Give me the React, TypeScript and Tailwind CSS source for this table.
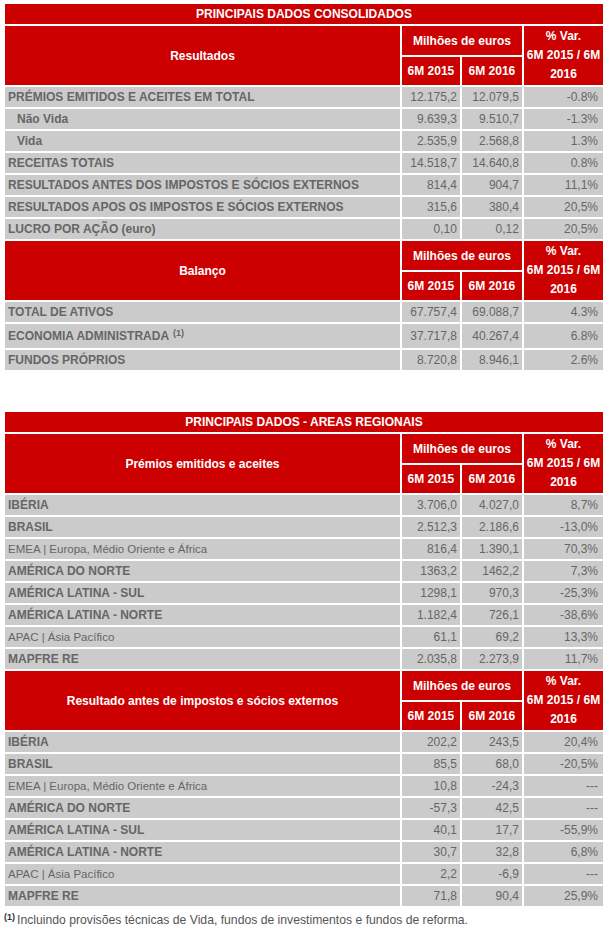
import React from "react";

type Row = {
    label: string;
    a: string;
    b: string;
    v: string;
    bold?: boolean;
    indent?: boolean;
    note?: boolean;
};

const resultados: Row[] = [
    { label: "PRÉMIOS EMITIDOS E ACEITES EM TOTAL", a: "12.175,2", b: "12.079,5", v: "-0.8%", bold: true },
    { label: "Não Vida", a: "9.639,3", b: "9.510,7", v: "-1.3%", bold: true, indent: true },
    { label: "Vida", a: "2.535,9", b: "2.568,8", v: "1.3%", bold: true, indent: true },
    { label: "RECEITAS TOTAIS", a: "14.518,7", b: "14.640,8", v: "0.8%", bold: true },
    { label: "RESULTADOS ANTES DOS IMPOSTOS E SÓCIOS EXTERNOS", a: "814,4", b: "904,7", v: "11,1%", bold: true },
    { label: "RESULTADOS APOS OS IMPOSTOS E SÓCIOS EXTERNOS", a: "315,6", b: "380,4", v: "20,5%", bold: true },
    { label: "LUCRO POR AÇÃO (euro)", a: "0,10", b: "0,12", v: "20,5%", bold: true },
];

const balanco: Row[] = [
    { label: "TOTAL DE ATIVOS", a: "67.757,4", b: "69.088,7", v: "4.3%", bold: true },
    { label: "ECONOMIA ADMINISTRADA", a: "37.717,8", b: "40.267,4", v: "6.8%", bold: true, note: true },
    { label: "FUNDOS PRÓPRIOS", a: "8.720,8", b: "8.946,1", v: "2.6%", bold: true },
];

const premios: Row[] = [
    { label: "IBÉRIA", a: "3.706,0", b: "4.027,0", v: "8,7%", bold: true },
    { label: "BRASIL", a: "2.512,3", b: "2.186,6", v: "-13,0%", bold: true },
    { label: "EMEA | Europa, Médio Oriente e África", a: "816,4", b: "1.390,1", v: "70,3%" },
    { label: "AMÉRICA DO NORTE", a: "1363,2", b: "1462,2", v: "7,3%", bold: true },
    { label: "AMÉRICA LATINA - SUL", a: "1298,1", b: "970,3", v: "-25,3%", bold: true },
    { label: "AMÉRICA LATINA - NORTE", a: "1.182,4", b: "726,1", v: "-38,6%", bold: true },
    { label: "APAC | Ásia Pacífico", a: "61,1", b: "69,2", v: "13,3%" },
    { label: "MAPFRE RE", a: "2.035,8", b: "2.273,9", v: "11,7%", bold: true },
];

const resultadoAntes: Row[] = [
    { label: "IBÉRIA", a: "202,2", b: "243,5", v: "20,4%", bold: true },
    { label: "BRASIL", a: "85,5", b: "68,0", v: "-20,5%", bold: true },
    { label: "EMEA | Europa, Médio Oriente e África", a: "10,8", b: "-24,3", v: "---" },
    { label: "AMÉRICA DO NORTE", a: "-57,3", b: "42,5", v: "---", bold: true },
    { label: "AMÉRICA LATINA - SUL", a: "40,1", b: "17,7", v: "-55,9%", bold: true },
    { label: "AMÉRICA LATINA - NORTE", a: "30,7", b: "32,8", v: "6,8%", bold: true },
    { label: "APAC | Ásia Pacífico", a: "2,2", b: "-6,9", v: "---" },
    { label: "MAPFRE RE", a: "71,8", b: "90,4", v: "25,9%", bold: true },
];

function Header({ title }: { title: string }) {
    return (
        <>
            <tr className="h-[29px]">
                <td rowSpan={2} className="bg-[#cc0000] text-center font-bold text-white">
                    {title}
                </td>
                <td colSpan={2} className="bg-[#cc0000] text-center font-bold text-white">
                    Milhões de euros
                </td>
                <td rowSpan={2} className="bg-[#cc0000] text-center font-bold leading-[19px] text-white">
                    % Var.
                    <br />
                    6M 2015 / 6M
                    <br />
                    2016
                </td>
            </tr>
            <tr className="h-[28px]">
                <td className="bg-[#cc0000] text-center font-bold text-white">6M 2015</td>
                <td className="bg-[#cc0000] text-center font-bold text-white">6M 2016</td>
            </tr>
        </>
    );
}

function DataRow({ row }: { row: Row }) {
    return (
        <tr className={row.note ? "h-6" : "h-5"}>
            <td
                className={`bg-[#cbcbcb] py-0 leading-5 text-[#666] ${row.bold ? "font-bold" : "text-[11.5px]"} ${
                    row.indent ? "pl-3" : "pl-[3px]"
                }`}
            >
                {row.label}
                {row.note && <sup className="ml-1 text-[9px] font-bold">(1)</sup>}
            </td>
            <td className="bg-[#cbcbcb] py-0 pr-[3px] text-right leading-5 text-[#666]">{row.a}</td>
            <td className="bg-[#cbcbcb] py-0 pr-[3px] text-right leading-5 text-[#666]">{row.b}</td>
            <td className="bg-[#cbcbcb] py-0 pr-[5px] text-right leading-5 text-[#666]">{row.v}</td>
        </tr>
    );
}

function Table({ title, children }: { title: string; children: React.ReactNode }) {
    return (
        <table className="w-[602px] table-fixed border-separate border-spacing-[2px] text-[12px]">
            <colgroup>
                <col />
                <col className="w-[58px]" />
                <col className="w-[60px]" />
                <col className="w-[79px]" />
            </colgroup>
            <tbody>
                <tr className="h-5">
                    <td colSpan={4} className="bg-[#cc0000] py-0 text-center font-bold leading-5 text-white">
                        {title}
                    </td>
                </tr>
                {children}
            </tbody>
        </table>
    );
}

export default function App() {
    return (
        <div className="min-h-[932px] w-[610px] bg-white pl-[3px] pt-[2px] font-['Liberation_Sans',Arial,sans-serif]">
            <Table title="PRINCIPAIS DADOS CONSOLIDADOS">
                <Header title="Resultados" />
                {resultados.map((r) => (
                    <DataRow key={r.label} row={r} />
                ))}
                <Header title="Balanço" />
                {balanco.map((r) => (
                    <DataRow key={r.label} row={r} />
                ))}
            </Table>

            <div className="mt-[38px]">
                <Table title="PRINCIPAIS DADOS - AREAS REGIONAIS">
                    <Header title="Prémios emitidos e aceites" />
                    {premios.map((r) => (
                        <DataRow key={r.label} row={r} />
                    ))}
                    <Header title="Resultado antes de impostos e sócios externos" />
                    {resultadoAntes.map((r) => (
                        <DataRow key={"r" + r.label} row={r} />
                    ))}
                </Table>
            </div>

            {/* Footnote */}
            <p className="mt-[4px] pl-[1px] text-[12.2px] leading-4 text-[#555]">
                <sup className="mr-[2px] text-[9px] font-bold text-[#333]">(1)</sup>
                Incluindo provisões técnicas de Vida, fundos de investimentos e fundos de reforma.
            </p>
        </div>
    );
}
